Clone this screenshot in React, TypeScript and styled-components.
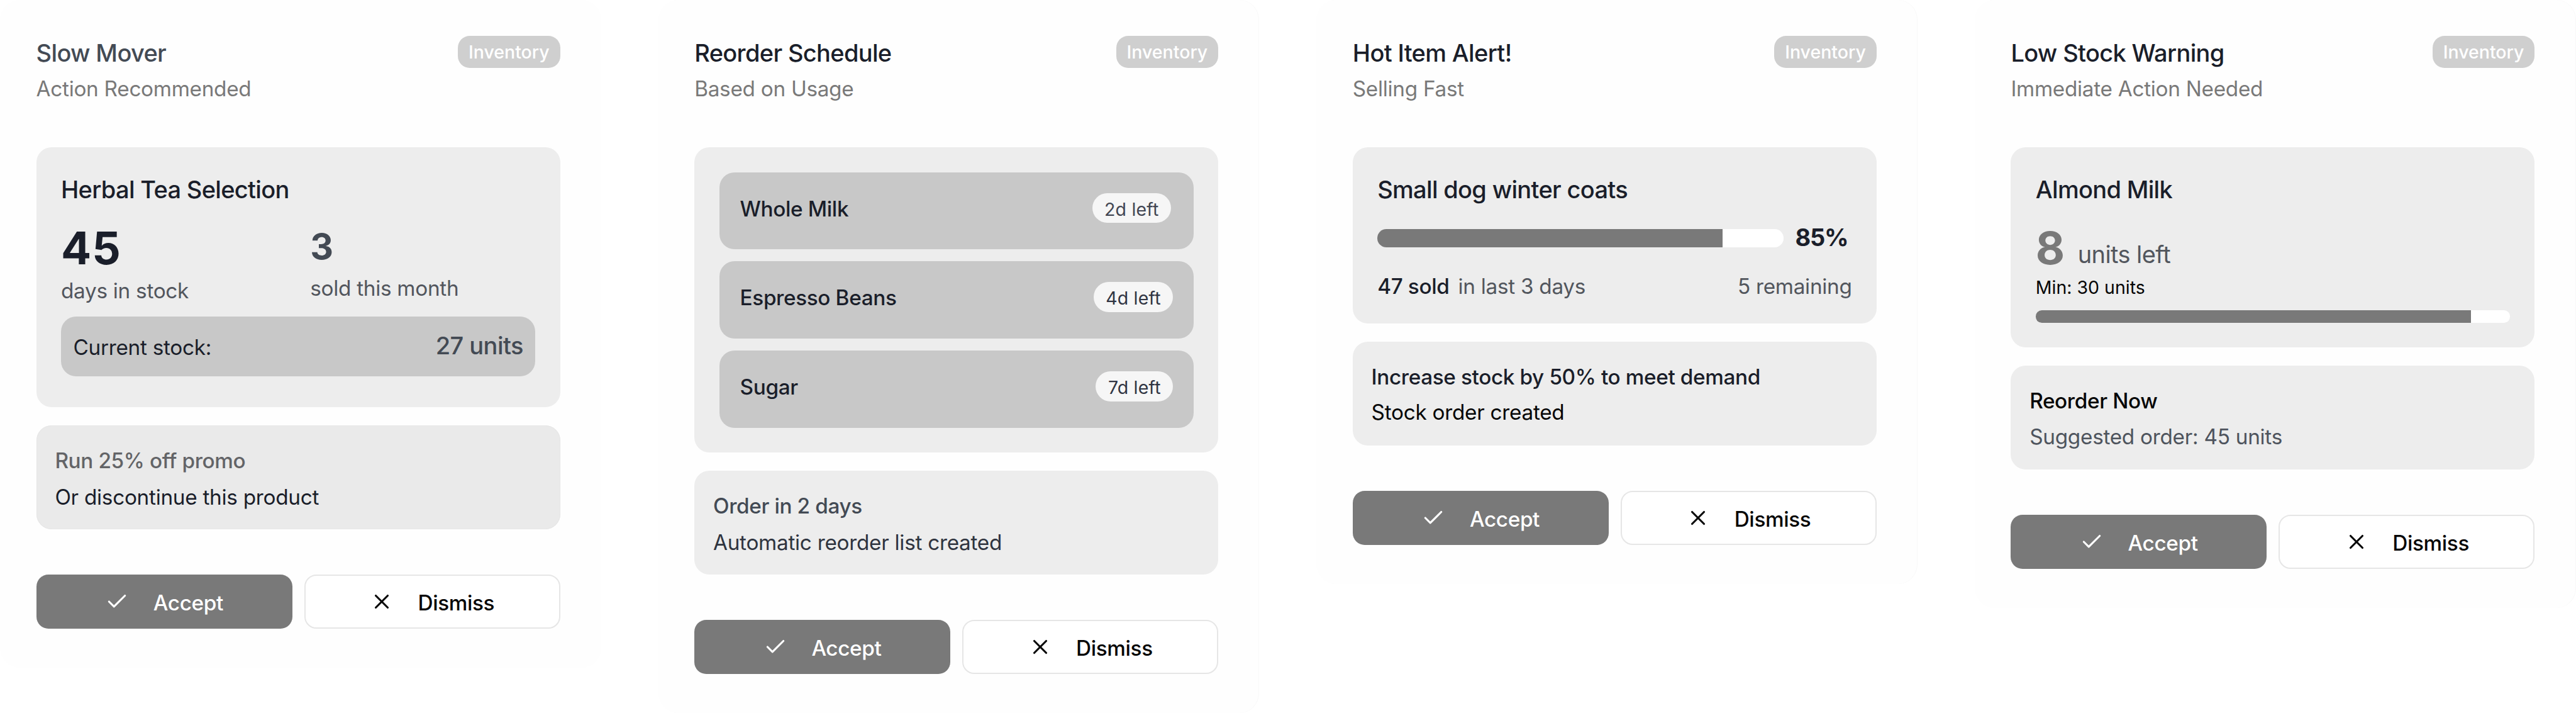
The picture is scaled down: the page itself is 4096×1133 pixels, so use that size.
import type { ReactNode } from 'react';
import styled, { createGlobalStyle } from 'styled-components';
import { Check, X } from 'lucide-react';

const GlobalStyle = createGlobalStyle`
  * {
    box-sizing: border-box;
  }
  body {
    margin: 0;
    background: #ffffff;
    font-family: Inter, 'Liberation Sans', sans-serif;
    overflow: hidden;
  }
`;

const Board = styled.main`
  display: flex;
  align-items: flex-start;
  gap: 90.8px;
  width: 4096px;
  height: 1133px;
`;

const Card = styled.article<{ $edge?: boolean }>`
  flex: none;
  display: flex;
  flex-direction: column;
  width: 955.8px;
  padding: 57.1px 65.2px 62px 57.6px;
  background: #fefefe;
  border-radius: 31px;
  box-shadow: ${props => props.$edge ? 'inset -1px 0 0 #f8f8f8' : 'none'};
`;

const CardHeader = styled.header`
  display: flex;
  justify-content: space-between;
  align-items: flex-start;
  height: 177.1px;
`;

const Title = styled.h2<{ $color?: string }>`
  margin: 0;
  font-size: 38px;
  font-weight: 500;
  line-height: 55.4px;
  letter-spacing: -0.66px;
  color: ${props => props.$color || '#1a1e2a'};
`;

const Subtitle = styled.p`
  margin: 5.3px 0 0;
  font-size: 33.3px;
  line-height: 47.5px;
  letter-spacing: -0.28px;
  color: #797979;
`;

const Badge = styled.span`
  display: flex;
  justify-content: center;
  width: 162.6px;
  height: 50.6px;
  border-radius: 19px;
  background: #cfcfcf;
  color: #ffffff;
  font-size: 28.5px;
  font-weight: 500;
  line-height: 51px;
`;

const Panel = styled.section<{ $height: number }>`
  height: ${props => props.$height}px;
  padding: 38.4px 39.2px 0 39.4px;
  border-radius: 24px;
  background: #ededed;
`;

const ProductName = styled.h3`
  margin: 0;
  font-size: 38px;
  font-weight: 500;
  line-height: 57px;
  letter-spacing: -0.68px;
  color: #1a1e2a;
`;

const Stats = styled.div`
  display: grid;
  grid-template-columns: 1fr 1fr;
  column-gap: 38px;
  height: 149px;
  margin-top: 24.2px;
`;

const BigNumber = styled.div<{ $color?: string }>`
  font-size: 71.3px;
  font-weight: 700;
  line-height: 80px;
  letter-spacing: 0.94px;
  color: ${props => props.$color || '#1a1e2a'};
`;

const MediumNumber = styled.div`
  font-size: 57px;
  font-weight: 700;
  line-height: 76.6px;
  color: #434a54;
`;

const StatLabel = styled.div`
  margin-top: 5px;
  font-size: 33.3px;
  line-height: 47.5px;
  letter-spacing: -0.28px;
  color: #52565d;
`;

const StockRow = styled.div`
  display: flex;
  justify-content: space-between;
  align-items: center;
  height: 95.5px;
  padding: 0 19.5px;
  border-radius: 24px;
  background: #c8c8c8;
`;

const StockLabel = styled.span`
  padding-top: 3.2px;
  font-size: 33.3px;
  letter-spacing: -0.28px;
  color: #1a1e2a;
`;

const StockValue = styled.span`
  padding-bottom: 2.2px;
  font-size: 38px;
  font-weight: 500;
  letter-spacing: -0.55px;
  color: #434a54;
`;

const ItemList = styled.div`
  display: flex;
  flex-direction: column;
  gap: 19px;
  padding-top: 1.1px;
`;

const Item = styled.div<{ $inset: number }>`
  display: flex;
  justify-content: space-between;
  align-items: flex-start;
  height: 122.7px;
  padding: 33px ${props => props.$inset}px 0 33px;
  border-radius: 24px;
  background: #c8c8c8;
`;

const ItemName = styled.span`
  font-size: 33.3px;
  font-weight: 500;
  line-height: 51.4px;
  letter-spacing: -0.357px;
  color: #1a1e2a;
`;

const Pill = styled.span<{ $color: string }>`
  height: 47.6px;
  padding: 0 19.6px;
  border-radius: 24px;
  background: #f6f6f6;
  font-size: 28.5px;
  line-height: 51px;
  letter-spacing: 0.15px;
  color: ${props => props.$color};
`;

const ProgressRow = styled.div`
  display: flex;
  align-items: center;
  gap: 19px;
  height: 57px;
  margin-top: 20.5px;
`;

const Track = styled.div<{ $size: number }>`
  flex: 1;
  height: ${props => props.$size}px;
  border-radius: ${props => props.$size / 2}px;
  background: #ffffff;
  overflow: hidden;
`;

const Fill = styled.div`
  height: 100%;
  background: #797979;
`;

const Percent = styled.span`
  width: 90px;
  font-size: 38px;
  font-weight: 700;
  line-height: 54.4px;
  letter-spacing: -1.3px;
  padding-bottom: 2.4px;
  color: #1a1e2a;
`;

const SalesRow = styled.div`
  display: flex;
  justify-content: space-between;
  margin-top: 24.6px;
  font-size: 33.3px;
  line-height: 47.5px;
  letter-spacing: -0.28px;
  color: #52565d;
`;

const Sold = styled.span`
  margin-right: 14px;
  font-weight: 500;
  letter-spacing: -0.357px;
  color: #1a1e2a;
`;

const UnitsRow = styled.div`
  display: flex;
  align-items: flex-start;
  gap: 19.6px;
  height: 80px;
  margin-top: 24.2px;
`;

const UnitsLabel = styled.span`
  padding-top: 21.8px;
  font-size: 38px;
  line-height: 57px;
  letter-spacing: -0.6px;
  color: #52565d;
`;

const Minimum = styled.div`
  margin: 3.8px 0 17.8px;
  font-size: 28.5px;
  line-height: 38px;
  color: #060606;
`;

const Suggestion = styled.section<{ $shaded?: boolean }>`
  height: 165px;
  margin: 28.8px 0 72px;
  padding: 33.2px 29.8px 0;
  border-radius: 24px;
  background: ${props => props.$shaded ? '#eaeaea' : '#ededed'};
  box-shadow: ${props => props.$shaded ? 'inset 0 0 0 1px #e6e6e6' : 'none'};
`;

const SuggestionLine = styled.p<{ $color: string; $strong?: boolean; $gap?: number }>`
  margin: 0 0 ${props => props.$gap || 0}px;
  font-size: 33.3px;
  font-weight: ${props => props.$strong ? 500 : 400};
  line-height: 47.5px;
  letter-spacing: ${props => props.$strong ? '-0.37px' : '-0.27px'};
  color: ${props => props.$color};
`;

const Actions = styled.footer`
  display: grid;
  grid-template-columns: 1fr 1fr;
  gap: 19px;
`;

const ActionButton = styled.button<{ $primary?: boolean }>`
  display: flex;
  align-items: center;
  justify-content: center;
  gap: 38.5px;
  height: 86px;
  padding: 0;
  border: ${props => props.$primary ? 'none' : '2px solid #e6e6e6'};
  border-radius: 19px;
  background: ${props => props.$primary ? '#797979' : '#ffffff'};
  color: ${props => props.$primary ? '#ffffff' : '#060606'};
  font-family: inherit;
  font-size: 33.3px;
  font-weight: 500;
  letter-spacing: -0.357px;

  span {
    padding-top: 4px;
  }
`;

interface InventoryCardProps {
  title: string;
  subtitle: string;
  titleColor?: string;
  edge?: boolean;
  children: ReactNode;
}

const InventoryCard = ({ title, subtitle, titleColor, edge, children }: InventoryCardProps) => (
  <Card $edge={edge}>
    <CardHeader>
      <div>
        <Title $color={titleColor}>{title}</Title>
        <Subtitle>{subtitle}</Subtitle>
      </div>
      <Badge>Inventory</Badge>
    </CardHeader>
    {children}
    <Actions>
      <ActionButton $primary>
        <Check size={38} />
        <span>Accept</span>
      </ActionButton>
      <ActionButton>
        <X size={38} />
        <span>Dismiss</span>
      </ActionButton>
    </Actions>
  </Card>
);

const Progress = ({ value, size }: { value: number; size: number }) => (
  <Track $size={size}>
    <Fill style={{ width: `${value}%` }} />
  </Track>
);

const reorderItems = [
  { name: 'Whole Milk', left: '2d left', color: '#434753', inset: 36 },
  { name: 'Espresso Beans', left: '4d left', color: '#303543', inset: 32.8 },
  { name: 'Sugar', left: '7d left', color: '#303543', inset: 32.8 }
];

const App = () => (
  <>
    <GlobalStyle />
    <Board>
      <InventoryCard title="Slow Mover" subtitle="Action Recommended" titleColor="#434a54">
        <Panel $height={413.1}>
          <ProductName>Herbal Tea Selection</ProductName>
          <Stats>
            <div>
              <BigNumber>45</BigNumber>
              <StatLabel>days in stock</StatLabel>
            </div>
            <div>
              <MediumNumber>3</MediumNumber>
              <StatLabel>sold this month</StatLabel>
            </div>
          </Stats>
          <StockRow>
            <StockLabel>Current stock:</StockLabel>
            <StockValue>27 units</StockValue>
          </StockRow>
        </Panel>
        <Suggestion $shaded>
          <SuggestionLine $color="#636467" $strong $gap={10.3}>Run 25% off promo</SuggestionLine>
          <SuggestionLine $color="#1a1e2a">Or discontinue this product</SuggestionLine>
        </Suggestion>
      </InventoryCard>

      <InventoryCard title="Reorder Schedule" subtitle="Based on Usage" edge>
        <Panel $height={485}>
          <ItemList>
            {reorderItems.map(item => (
              <Item key={item.name} $inset={item.inset}>
                <ItemName>{item.name}</ItemName>
                <Pill $color={item.color}>{item.left}</Pill>
              </Item>
            ))}
          </ItemList>
        </Panel>
        <Suggestion>
          <SuggestionLine $color="#434a54" $strong $gap={10.3}>Order in 2 days</SuggestionLine>
          <SuggestionLine $color="#2f343f">Automatic reorder list created</SuggestionLine>
        </Suggestion>
      </InventoryCard>

      <InventoryCard title="Hot Item Alert!" subtitle="Selling Fast" edge>
        <Panel $height={279.7}>
          <ProductName>Small dog winter coats</ProductName>
          <ProgressRow>
            <Progress value={85} size={28.5} />
            <Percent>85%</Percent>
          </ProgressRow>
          <SalesRow>
            <div>
              <Sold>47 sold</Sold>
              <span>in last 3 days</span>
            </div>
            <span>5 remaining</span>
          </SalesRow>
        </Panel>
        <Suggestion>
          <SuggestionLine $color="#1a1e2a" $strong $gap={8.5}>Increase stock by 50% to meet demand</SuggestionLine>
          <SuggestionLine $color="#060606">Stock order created</SuggestionLine>
        </Suggestion>
      </InventoryCard>

      <InventoryCard title="Low Stock Warning" subtitle="Immediate Action Needed" edge>
        <Panel $height={317.8}>
          <ProductName>Almond Milk</ProductName>
          <UnitsRow>
            <BigNumber $color="#797979">8</BigNumber>
            <UnitsLabel>units left</UnitsLabel>
          </UnitsRow>
          <Minimum>Min: 30 units</Minimum>
          <Progress value={91.8} size={19.2} />
        </Panel>
        <Suggestion>
          <SuggestionLine $color="#060606" $strong $gap={9.5}>Reorder Now</SuggestionLine>
          <SuggestionLine $color="#4e545d">Suggested order: 45 units</SuggestionLine>
        </Suggestion>
      </InventoryCard>
    </Board>
  </>
);

export default App;
